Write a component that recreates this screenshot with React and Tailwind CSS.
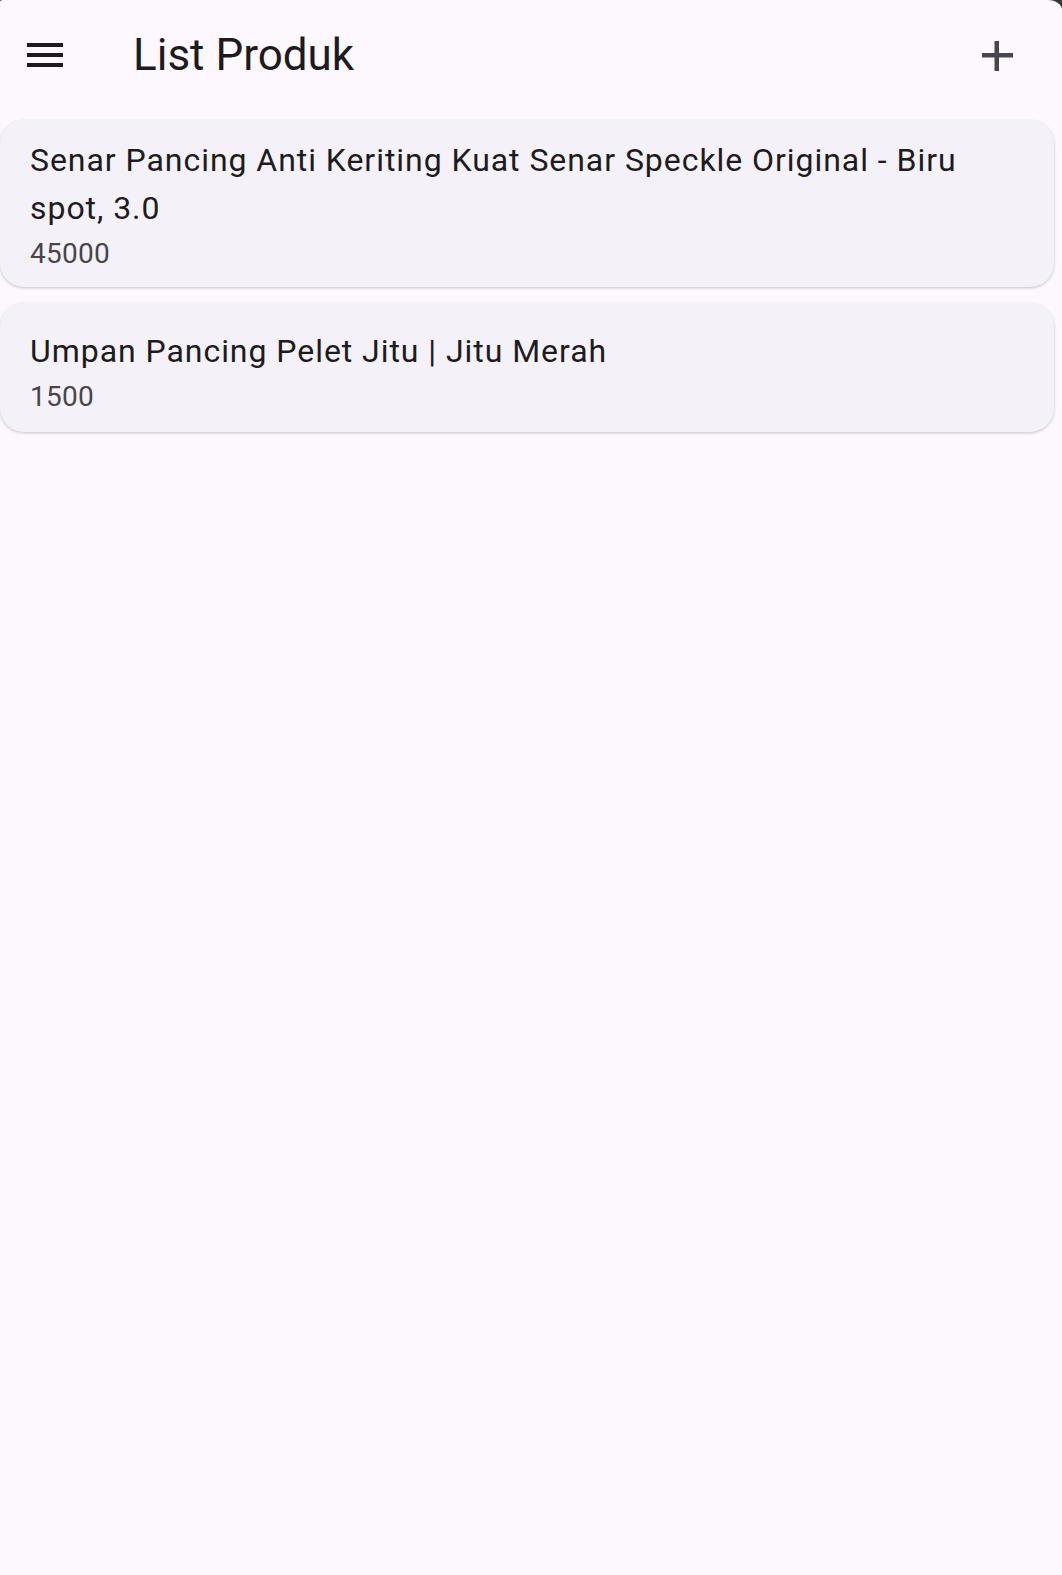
import React from "react";

const products = [
  { name: "Senar Pancing Anti Keriting Kuat Senar Speckle Original - Biru spot, 3.0", price: "45000", pt: "pt-[16px]", pb: "pb-[13px]" },
  { name: "Umpan Pancing Pelet Jitu | Jitu Merah", price: "1500", pt: "pt-[24px]", pb: "pb-[15px]" },
];

function MenuIcon() {
  return (
    <svg width="48" height="48" viewBox="0 0 24 24" fill="#1d1b20">
      <rect x="3" y="6" width="18" height="2" />
      <rect x="3" y="11" width="18" height="2" />
      <rect x="3" y="16" width="18" height="2" />
    </svg>
  );
}

function PlusIcon() {
  return (
    <svg width="31" height="30" viewBox="0 0 31 30" fill="#48454e">
      <rect x="0" y="12" width="31" height="4.5" />
      <rect x="12.5" y="0" width="4.5" height="30" />
    </svg>
  );
}

export default function App() {
  return (
    <div className="min-h-screen w-full bg-[#373737]" style={{ fontFamily: "Roboto, 'Noto Sans', sans-serif" }}>
      <div className="min-h-screen w-full bg-[#fdf8fd] rounded-tr-[14px_10px] rounded-tl-[3px_2px]">
        <header className="h-[110px] flex items-center">
          <button className="ml-[21px] w-[48px] h-[48px] flex items-center justify-center">
            <MenuIcon />
          </button>
          <h1 className="ml-[64px] text-[44px] leading-[52px] text-[#1d1b20] font-normal">List Produk</h1>
          <div className="flex-1" />
          <button className="mr-[49px] mt-[2px] w-[31px] h-[30px] flex items-center justify-center">
            <PlusIcon />
          </button>
        </header>
        <div className="pt-[10px] pr-[8px] flex flex-col gap-[16px]">
          {products.map((p) => (
            <div
              key={p.name}
              className={`bg-[#f4f2f8] rounded-[24px] shadow-[0_1px_3px_rgba(0,0,0,0.22)] pl-[30px] pr-[30px] ${p.pt} ${p.pb}`}
            >
              <div className="text-[32px] leading-[48px] tracking-[0.95px] text-[#1d1b20]">{p.name}</div>
              <div className="mt-[2px] text-[28px] leading-[40px] tracking-[0.25px] text-[#49454f]">{p.price}</div>
            </div>
          ))}
        </div>
      </div>
    </div>
  );
}
